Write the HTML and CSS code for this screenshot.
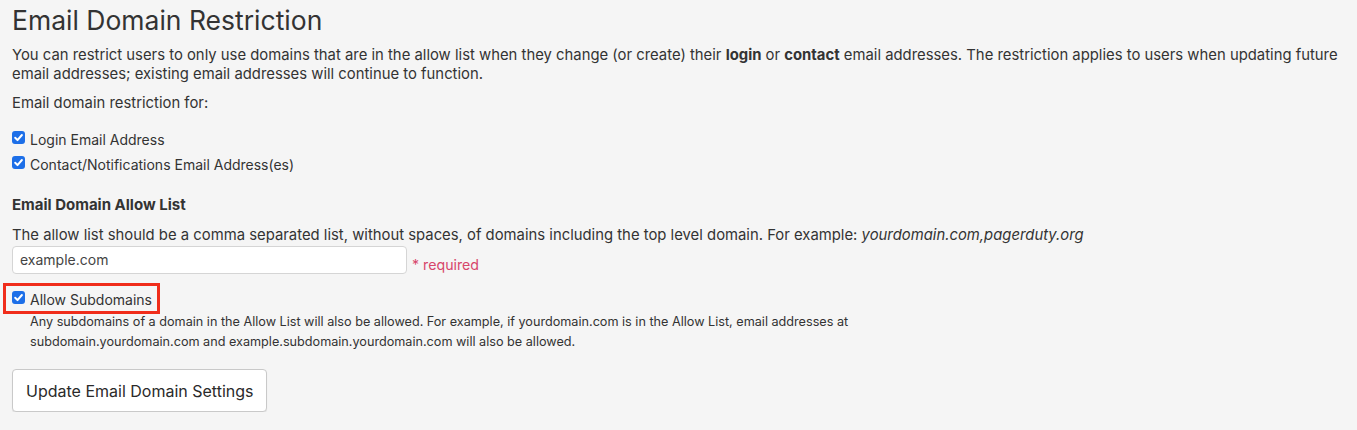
FILE: index.html
```html
<!DOCTYPE html>
<html>
<head>
<meta charset="utf-8">
<link rel="stylesheet" href="styles.css">
</head>
<body>
<div class="page">
  <h1 class="title">Email Domain Restriction</h1>
  <p class="intro">You can restrict users to only use domains that are in the allow list when they change (or create) their <b>login</b> or <b>contact</b> email addresses. The restriction applies to users when updating future email addresses; existing email addresses will continue to function.</p>
  <p class="label">Email domain restriction for:</p>
  <div class="checks">
    <label class="check"><span class="box"><svg viewBox="0 0 13 13" width="13" height="13"><path d="M3.2 6.8 L5.5 9.1 L9.9 4" fill="none" stroke="#fff" stroke-width="2" stroke-linecap="round" stroke-linejoin="round"/></svg></span>Login Email Address</label>
    <label class="check"><span class="box"><svg viewBox="0 0 13 13" width="13" height="13"><path d="M3.2 6.8 L5.5 9.1 L9.9 4" fill="none" stroke="#fff" stroke-width="2" stroke-linecap="round" stroke-linejoin="round"/></svg></span>Contact/Notifications Email Address(es)</label>
  </div>
  <h2 class="subtitle">Email Domain Allow List</h2>
  <p class="desc">The allow list should be a comma separated list, without spaces, of domains including the top level domain. For example: <i>yourdomain.com,pagerduty.org</i></p>
  <div class="field-row">
    <div class="input">example.com</div>
    <span class="required">* required</span>
  </div>
  <div class="sub-wrap">
    <label class="check highlight"><span class="box"><svg viewBox="0 0 13 13" width="13" height="13"><path d="M3.2 6.8 L5.5 9.1 L9.9 4" fill="none" stroke="#fff" stroke-width="2" stroke-linecap="round" stroke-linejoin="round"/></svg></span>Allow Subdomains</label>
    <p class="help">Any subdomains of a domain in the Allow List will also be allowed. For example, if yourdomain.com is in the Allow List, email addresses at<br>subdomain.yourdomain.com and example.subdomain.yourdomain.com will also be allowed.</p>
  </div>
  <button class="btn">Update Email Domain Settings</button>
</div>
</body>
</html>
```
FILE: styles.css
```css
html, body {
  margin: 0;
  padding: 0;
  background: #f5f5f5;
}
body {
  font-family: Inter, "Noto Sans", sans-serif;
  color: #333;
}
.page {
  padding: 4px 12px 0 12px;
}
.title {
  margin: 0;
  font-size: 26.5px;
  font-weight: 400;
  line-height: 32px;
  color: #333;
}
.intro {
  margin: 10px 0 0 0;
  font-size: 14.85px;
  line-height: 19px;
}
.intro b { font-weight: 700; }
.label {
  margin: 10px 0 0 0;
  font-size: 14.85px;
  line-height: 19px;
}
.checks {
  margin-top: 17px;
  display: flex;
  flex-direction: column;
  gap: 6px;
}
.check {
  display: flex;
  align-items: center;
  font-size: 14px;
  line-height: 19px;
}
.box {
  width: 13px;
  height: 13px;
  border-radius: 3px;
  background: #1d6fe8;
  display: inline-flex;
  margin-right: 5px;
  flex: none;
  position: relative;
  top: -2px;
}
.subtitle {
  margin: 21px 0 0 0;
  font-size: 15px;
  font-weight: 700;
  line-height: 19px;
}
.desc {
  margin: 12px 0 0 0;
  font-size: 14.85px;
  line-height: 19px;
}
.desc i { font-style: italic; }
.field-row {
  display: flex;
  align-items: flex-end;
  margin-top: 1px;
}
.input {
  width: 395px;
  height: 28px;
  box-sizing: border-box;
  background: #fff;
  border: 1px solid #d5d5d5;
  border-radius: 4px;
  padding: 0 7px;
  font-size: 14px;
  line-height: 25px;
  color: #444;
}
.required {
  margin-left: 5px;
  font-size: 14.2px;
  color: #d7466b;
  line-height: 19px;
  margin-bottom: 0;
}
.sub-wrap {
  margin-top: 9px;
}
.highlight {
  display: inline-flex;
  border: 3px solid #f02d1b;
  margin-left: -9px;
  padding: 4px 5px 2px 6px;
}
.highlight .box { top: -2px; }
.help {
  margin: -2px 0 0 18px;
  font-size: 12.65px;
  line-height: 20px;
  color: #333;
}
.btn {
  margin-top: 17px;
  font-family: Inter, "Noto Sans", sans-serif;
  font-size: 16px;
  color: #2a2a2a;
  background: #fff;
  border: 1px solid #c9c9c9;
  border-radius: 4px;
  height: 43px;
  padding: 0 13px;
  box-shadow: 0 1px 1px rgba(0,0,0,0.08);
}
```
